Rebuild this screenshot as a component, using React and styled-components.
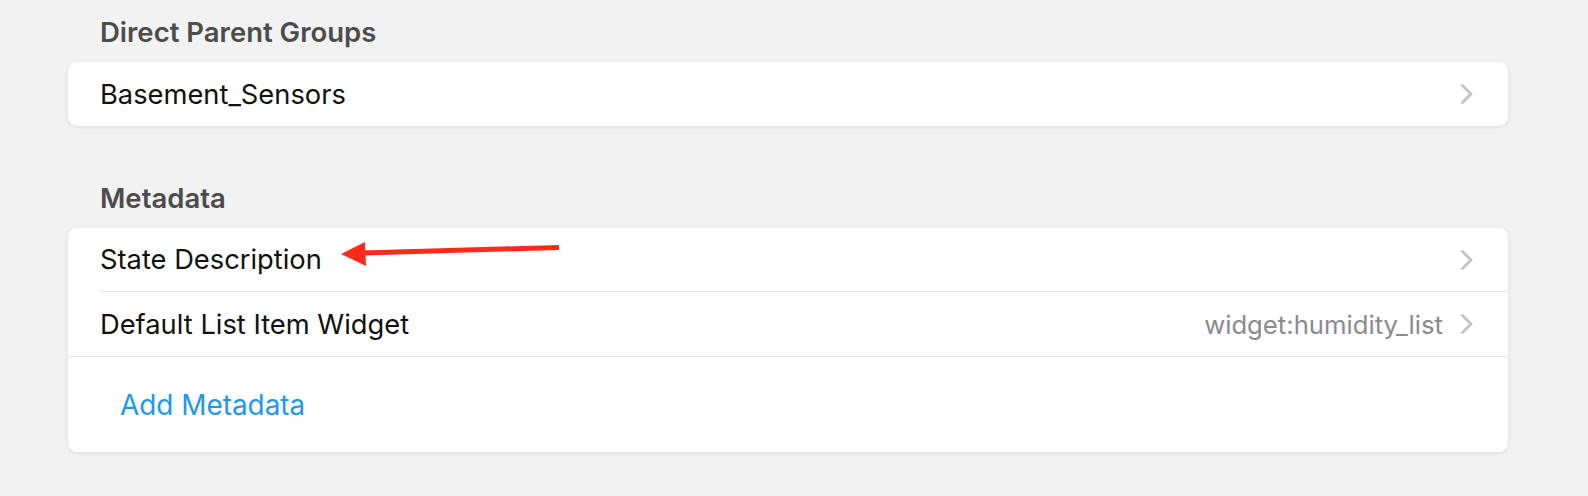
import React from "react";
import styled, {createGlobalStyle} from "styled-components";

const GlobalStyle = createGlobalStyle`
  html, body {
    margin: 0;
    padding: 0;
    background: #f2f2f2;
    font-family: Inter, "Noto Sans", "Liberation Sans", sans-serif;
    -webkit-font-smoothing: antialiased;
  }
`

const Page = styled.div`
  position: relative;
  padding: 17px 80px 40px 68px;
  min-height: 496px;
  box-sizing: border-box;
`

const BlockTitle = styled.div`
  padding-left: 32px;
  margin-top: ${props => props.$top || 0}px;
  margin-bottom: 15px;
  height: 30px;
  line-height: 30px;
  font-size: 27.5px;
  font-weight: 600;
  color: #4c4c4c;
`

const Card = styled.div`
  background: #fff;
  border-radius: 9px;
  box-shadow: 0 1px 4px rgba(0, 0, 0, 0.1);
  overflow: hidden;
`

const Row = styled.div`
  display: flex;
  align-items: center;
  height: ${props => props.$height || 64}px;
  padding-left: 32px;
  box-sizing: border-box;
`

const RowInner = styled.div`
  flex: 1;
  align-self: stretch;
  display: flex;
  align-items: center;
  padding-right: 35px;
  border-bottom: ${props => props.$divider ? "1px solid #e2e2e4" : "none"};
`

const Title = styled.div`
  flex: 1;
  font-size: 27.3px;
  color: #111;
`

const After = styled.div`
  font-size: 25.7px;
  color: #8a8a8e;
  margin-right: 18px;
`

const Separator = styled.div`
  height: 1px;
  background: #e2e2e4;
`

const LinkButton = styled.div`
  padding-left: 20px;
  font-size: 27.9px;
  color: #1c98f0;
  cursor: pointer;
`

const Arrow = styled.svg`
  position: absolute;
  left: 0;
  top: 0;
  pointer-events: none;
`

function Chevron() {
    return (
        <svg width="12" height="20" viewBox="0 0 12 20">
            <polyline points="1.5,1.5 10,10 1.5,18.5" fill="none" stroke="#c5c5c8" strokeWidth="3"
                      strokeLinecap="round" strokeLinejoin="round"/>
        </svg>
    )
}

function ListItem({title, after, divider}) {
    return (
        <Row>
            <RowInner $divider={divider}>
                <Title>{title}</Title>
                {after && <After>{after}</After>}
                <Chevron/>
            </RowInner>
        </Row>
    )
}

export default function App() {
    return (
        <>
            <GlobalStyle/>
            <Page>
                <BlockTitle>Direct Parent Groups</BlockTitle>
                <Card>
                    <ListItem title="Basement_Sensors"/>
                </Card>

                <BlockTitle $top={57}>Metadata</BlockTitle>
                <Card>
                    <ListItem title="State Description" divider/>
                    <ListItem title="Default List Item Widget" after="widget:humidity_list"/>
                    <Separator/>
                    <Row $height={95}>
                        <LinkButton>Add Metadata</LinkButton>
                    </Row>
                </Card>

                <Arrow width="600" height="300" viewBox="0 0 600 300">
                    <line x1="559" y1="247.5" x2="362" y2="253" stroke="#fe2a1c" strokeWidth="5"/>
                    <polygon points="341,254 365,242 366,266" fill="#fe2a1c"/>
                </Arrow>
            </Page>
        </>
    )
}
